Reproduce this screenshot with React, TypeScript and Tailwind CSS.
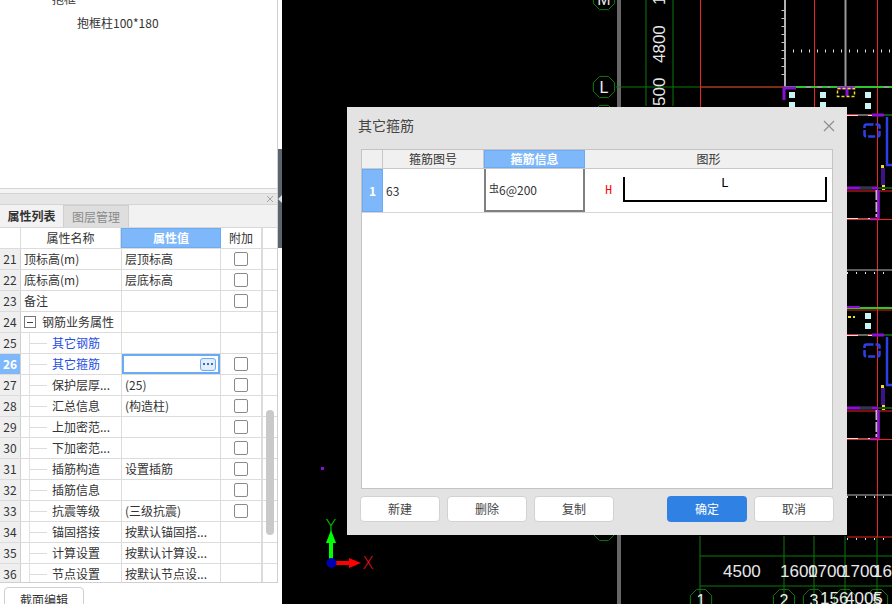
import React from "react";

type Row = { n: number; name: string; val?: string; chk?: boolean; kind?: "top" | "group" | "child"; blue?: boolean; sel?: boolean };

const rows: Row[] = [
  { n: 21, name: "顶标高(m)", val: "层顶标高", chk: true, kind: "top" },
  { n: 22, name: "底标高(m)", val: "层底标高", chk: true, kind: "top" },
  { n: 23, name: "备注", chk: true, kind: "top" },
  { n: 24, name: "钢筋业务属性", kind: "group" },
  { n: 25, name: "其它钢筋", kind: "child", blue: true },
  { n: 26, name: "其它箍筋", kind: "child", blue: true, chk: true, sel: true },
  { n: 27, name: "保护层厚...", val: "(25)", kind: "child", chk: true },
  { n: 28, name: "汇总信息", val: "(构造柱)", kind: "child", chk: true },
  { n: 29, name: "上加密范...", kind: "child", chk: true },
  { n: 30, name: "下加密范...", kind: "child", chk: true },
  { n: 31, name: "插筋构造", val: "设置插筋", kind: "child", chk: true },
  { n: 32, name: "插筋信息", kind: "child", chk: true },
  { n: 33, name: "抗震等级", val: "(三级抗震)", kind: "child", chk: true },
  { n: 34, name: "锚固搭接", val: "按默认锚固搭...", kind: "child" },
  { n: 35, name: "计算设置", val: "按默认计算设...", kind: "child" },
  { n: 36, name: "节点设置", val: "按默认节点设...", kind: "child" },
];

function PropRow({ r }: { r: Row }) {
  return (
    <div className="flex h-[21px] shrink-0 border-b border-[#dcdcdc]">
      <div className={r.sel ? "flex w-[21px] shrink-0 items-center justify-center border-r border-[#cfcfcf] bg-[#7eb8fb] font-bold text-white" : "flex w-[21px] shrink-0 items-center justify-center border-r border-[#cfcfcf] bg-[#efefef]"}>
        {r.n}
      </div>
      <div className="flex w-[101px] shrink-0 items-center border-r border-[#dcdcdc]">
        {r.kind === "top" && <span className="pl-[3px]">{r.name}</span>}
        {r.kind === "group" && (
          <>
            <span className="ml-[3px] flex h-[12px] w-[12px] items-center justify-center border border-[#777] bg-white">
              <span className="h-px w-[6px] bg-[#444]" />
            </span>
            <span className="ml-[6px]">{r.name}</span>
          </>
        )}
        {r.kind === "child" && (
          <>
            <span className="ml-[8px] h-[21px] w-px shrink-0 bg-[#e2e2e2]" />
            <span className="h-px w-[17px] shrink-0 bg-[#dcdcdc]" />
            <span className={r.blue ? "ml-[5px] text-[#1f4fe0]" : "ml-[5px]"}>{r.name}</span>
          </>
        )}
      </div>
      <div className="w-[99px] shrink-0 border-r border-[#dcdcdc]">
        {r.sel ? (
          <div className="flex h-[20px] items-center justify-end border-2 border-[#6aabf5] bg-white pr-[2px]">
            <span className="flex h-[13px] w-[16px] items-center justify-center gap-[2px] rounded-[3px] border border-[#6aabf5] bg-[#e3edfb]">
              <i className="h-[2px] w-[2px] bg-[#2f6fc8]" />
              <i className="h-[2px] w-[2px] bg-[#2f6fc8]" />
              <i className="h-[2px] w-[2px] bg-[#2f6fc8]" />
            </span>
          </div>
        ) : (
          <div className="flex h-[20px] items-center pl-[3px]">{r.val}</div>
        )}
      </div>
      <div className="flex w-[41px] shrink-0 items-center justify-center border-r border-[#dcdcdc]">
        {r.chk && <span className="h-[14px] w-[14px] rounded-[2px] border border-[#8a8a8a] bg-white" />}
      </div>
    </div>
  );
}

function Tree() {
  return (
    <div className="h-[189px] shrink-0 overflow-hidden border-b border-[#d6d6d6] bg-white">
      <div className="-mt-[13px]">
        <div className="flex h-[24px] items-center pl-[42px]">
          <span className="mr-[8px] h-[2px] w-[2px] bg-[#888]" />
          抱框
        </div>
        <div className="flex h-[24px] items-center pl-[77px]">抱框柱100*180</div>
      </div>
    </div>
  );
}

function LeftPanel() {
  return (
    <div className="flex h-[604px] w-[278px] shrink-0 flex-col bg-white text-[12px] text-[#333]">
      <div className="flex h-[583px] flex-col border-r border-b border-[#d0d0d0]">
        <Tree />
        <div className="h-[4px] shrink-0 bg-[#f4f4f4]" />
        <div className="flex h-[12px] shrink-0 items-center justify-end border-y border-[#d4d4d4] bg-[#e6e6e6] pr-[3px] text-[#aaa]">
          <svg width="8" height="8" viewBox="0 0 8 8" stroke="#a5a5a5" strokeWidth="1"><path d="M1 1l6 6M7 1l-6 6" /></svg>
        </div>
        <div className="flex h-[23px] shrink-0 border-b border-[#d8d8d8] bg-[#f2f2f2]">
          <div className="flex w-[63px] items-center justify-center font-bold text-[#333]">属性列表</div>
          <div className="flex w-[66px] items-center justify-center border border-b-0 border-[#cfcfcf] bg-[#dedede] text-[#8a8a8a]">图层管理</div>
        </div>
        <div className="relative min-h-0 flex-1 overflow-hidden">
          <div className="flex h-[21px] border-b border-[#dcdcdc]">
            <div className="w-[21px] shrink-0 border-r border-[#dcdcdc]" />
            <div className="flex w-[100px] shrink-0 items-center justify-center border-r border-[#dcdcdc]">属性名称</div>
            <div className="flex w-[100px] shrink-0 items-center justify-center border border-[#6aabf5] bg-[#7eb8fb] font-bold text-white">属性值</div>
            <div className="flex w-[41px] shrink-0 items-center justify-center border-r border-[#dcdcdc]">附加</div>
          </div>
          {rows.map((r) => (
            <PropRow key={r.n} r={r} />
          ))}
          <div className="absolute top-0 bottom-0 left-[262px] w-px bg-[#dcdcdc]" />
          <div className="absolute top-[182px] left-[266px] h-[125px] w-[8px] rounded-full bg-[#c9c9c9]" />
        </div>
      </div>
      <div className="flex-1 pt-[4px] pl-[4px]">
        <div className="flex h-[30px] w-[80px] justify-center rounded-t-[4px] border border-[#cfcfcf] bg-white pt-[3px] leading-[18px]">截面编辑</div>
      </div>
    </div>
  );
}

function Splitter() {
  return (
    <div className="w-[4px] shrink-0 bg-white pt-[149px]">
      <div className="flex h-[99px] items-center justify-center bg-[#5b6570]">
        <span className="h-0 w-0 border-y-[4px] border-r-[4px] border-y-transparent border-r-[#dfe3e6]" />
      </div>
    </div>
  );
}

function Hex({ x, y, label }: { x: number; y: number; label?: string }) {
  const r = 11.5;
  const pts = Array.from({ length: 8 }, (_, i) => {
    const a = (Math.PI / 4) * i + Math.PI / 8;
    return `${x + r * Math.cos(a)},${y + r * Math.sin(a)}`;
  }).join(" ");
  return (
    <g>
      <polygon points={pts} fill="none" stroke="#0d7a0d" strokeWidth="1" />
      {label && (
        <text x={x} y={y + 6} textAnchor="middle" fontSize="16" fill="#eee" fontFamily="'Liberation Sans', sans-serif">
          {label}
        </text>
      )}
    </g>
  );
}

function Bay({ dy }: { dy: number }) {
  return (
    <g transform={`translate(0 ${dy})`}>
      <path d="M847 115H872" stroke="#e8e8e8" strokeWidth="2" />
      <path d="M847 114.5H892" stroke="#e22" strokeWidth="1" />
      <path d="M858 115H868" stroke="#666" strokeWidth="2" />
      <path d="M872 115H884" stroke="#8a10d8" strokeWidth="3" />
      <path d="M884 115H892" stroke="#125012" strokeWidth="2" />
      <rect x="864.5" y="124.5" width="15" height="12" rx="2" fill="none" stroke="#2f3fe8" strokeWidth="2.5" strokeDasharray="7 2" />
      <path d="M887 117V165H892" fill="none" stroke="#2f3fe8" strokeWidth="2.5" />
      <rect x="881" y="165" width="3" height="3" fill="#f5e020" />
      <rect x="881" y="168" width="4" height="17" fill="#3c1488" />
      <rect x="882" y="185" width="3" height="5" fill="#f5e020" />
      <path d="M847 188H878" stroke="#8a10d8" strokeWidth="3" />
      <path d="M860 188H872" stroke="#125012" strokeWidth="2" />
      <path d="M878 188H892" stroke="#125012" strokeWidth="2" />
      <path d="M847 191H892" stroke="#e22" strokeWidth="1" />
      <path d="M876.5 190V217" stroke="#bbb" strokeWidth="2" strokeDasharray="10 2" />
      <path d="M878.5 190V219H870" fill="none" stroke="#8a10d8" strokeWidth="2.5" />
      <path d="M847 219H870" stroke="#e8e8e8" strokeWidth="2" />
      <path d="M858 219H868" stroke="#666" strokeWidth="2" />
      <path d="M847 219.5H892" stroke="#e22" strokeWidth="1" />
    </g>
  );
}

function Cad() {
  const squares = [
    [792, 95], [823, 95], [868, 95], [792, 105], [823, 105], [868, 106], [868, 316], [868, 326],
  ];
  return (
    <svg className="absolute inset-0" width="610" height="604" viewBox="282 0 610 604" fontFamily="'Liberation Sans', sans-serif">
      <rect x="617" y="0" width="4" height="604" fill="#666" />
      <path d="M646 0V106M673 0V106M616 87H785M700 536V604M784 536V604M814 536V604M845 536V604M877 536V604M700 556H892M700 586H892" stroke="#0d7a0d" strokeWidth="1" />
      <path d="M700.5 87H785" stroke="#e22" strokeWidth="1" />
      <path d="M700.5 0V108M814.5 0V108M877.5 0V537" stroke="#e22" strokeWidth="1" />
      <path d="M847 537H892" stroke="#e22" strokeWidth="1" />
      <path d="M847 495H892" stroke="#bbb" strokeWidth="1" />
      <path d="M847 497H892" stroke="#ddd" strokeWidth="2" strokeDasharray="1 8" />
      <path d="M847 539H892" stroke="#ddd" strokeWidth="2" strokeDasharray="1 8" />
      <path d="M785 0V87" stroke="#eee" strokeWidth="1.5" />
      <path d="M845.5 0V87" stroke="#9a9a9a" strokeWidth="2" />
      <path d="M793 51H892" stroke="#ddd" strokeWidth="3" strokeDasharray="1 7" />
      <path d="M783 10V80" stroke="#ccc" strokeWidth="3" strokeDasharray="1 7" />
      <path d="M784 87H892" stroke="#2cc92c" strokeWidth="2" />
      <path d="M806 87H830M884 87H892" stroke="#9a9a9a" strokeWidth="2" strokeDasharray="5 6" />
      <path d="M784 100V88H796M837 88H855M847 88V96" fill="none" stroke="#8a10d8" strokeWidth="3" />
      <rect x="837.5" y="88.5" width="17" height="8" fill="none" stroke="#f5e020" strokeWidth="1.5" strokeDasharray="3 2" />
      <Bay dy={0} />
      <Bay dy={220} />
      <path d="M847 270H892" stroke="#bbb" strokeWidth="1" />
      <path d="M847 273H892" stroke="#ddd" strokeWidth="2" strokeDasharray="1 8" />
      <path d="M847 308H892" stroke="#2cc92c" strokeWidth="2" />
      <path d="M847 307H860" stroke="#8a10d8" strokeWidth="2" />
      <path d="M847 310H892" stroke="#e22" strokeWidth="1" />
      <path d="M848 317H855" stroke="#f5e020" strokeWidth="2" strokeDasharray="3 2" />
      {squares.map(([x, y], i) => (
        <rect key={i} x={x - 3} y={y - 3} width="6" height="6" fill="#c8f4f4" />
      ))}
      <rect x="321" y="467" width="3" height="3" fill="#8a10d8" />
      <Hex x={604} y={-1} label="M" />
      <Hex x={604} y={87} label="L" />
      <Hex x={604} y={116} />
      <Hex x={604} y={530} />
      <Hex x={701} y={600} label="1" />
      <Hex x={784} y={600} label="2" />
      <Hex x={814} y={600} label="3" />
      <Hex x={845} y={600} />
      <Hex x={877} y={600} label="5" />
      <g fill="#e8e8e8" fontSize="17">
        <text transform="translate(665 63) rotate(-90)">4800</text>
        <text transform="translate(665 5) rotate(-90)">1</text>
        <text transform="translate(665 106) rotate(-90)">500</text>
        <text x="723" y="577">4500</text>
        <text x="780" y="577">1600</text>
        <text x="808" y="577">1700</text>
        <text x="841" y="577">1700</text>
        <text x="873" y="577">1600</text>
        <text x="820" y="604">156</text>
        <text x="845" y="604">4005</text>
      </g>
      <path d="M331 560V540" stroke="#00ff00" strokeWidth="4" />
      <polygon points="331,530 326,543 336,543" fill="#00ff00" />
      <path d="M335 563H352" stroke="#ff0000" strokeWidth="4" />
      <polygon points="361,563 349,558 349,568" fill="#ff0000" />
      <circle cx="331.5" cy="563" r="5" fill="#0000b0" />
      <text x="331" y="532" textAnchor="middle" fontSize="17" fill="#00e000" fontFamily="'DejaVu Sans', sans-serif" fontWeight="200">Y</text>
      <text x="368" y="569" textAnchor="middle" fontSize="17" fill="#ff1010" fontFamily="'DejaVu Sans', sans-serif" fontWeight="200">X</text>
    </svg>
  );
}

function DialogBtn({ label, primary }: { label: string; primary?: boolean }) {
  return (
    <button className={primary ? "h-[26px] w-[80px] rounded-[4px] bg-[#2f81e4] text-[12px] text-white" : "h-[26px] w-[80px] rounded-[4px] border border-[#d2d2d2] bg-white text-[12px] text-[#444]"}>
      {label}
    </button>
  );
}

function Dialog() {
  return (
    <div className="absolute top-[107px] left-[65px] flex h-[428px] w-[500px] flex-col bg-[#e3e3e3] px-[14px] text-[12px] text-[#333]">
      <div className="flex h-[42px] shrink-0 items-center justify-between pb-[5px]">
        <span className="-ml-[3px] text-[14px] text-[#444]">其它箍筋</span>
        <svg className="-mr-[2px]" width="12" height="12" viewBox="0 0 12 12" stroke="#8e8e8e" strokeWidth="1.2"><path d="M1 1l10 10M11 1L1 11" /></svg>
      </div>
      <div className="flex h-[340px] shrink-0 flex-col border border-[#c4c4c4] bg-white">
        <div className="flex h-[19px] shrink-0 border-b border-[#c8c8c8] bg-[#f0f0f0]">
          <div className="w-[21px] shrink-0 border-r border-[#c8c8c8]" />
          <div className="flex w-[101px] shrink-0 items-center justify-center border-r border-[#c8c8c8]">箍筋图号</div>
          <div className="flex w-[101px] shrink-0 items-center justify-center border border-[#6aabf5] bg-[#7eb8fb] font-bold text-white">箍筋信息</div>
          <div className="flex flex-1 items-center justify-center">图形</div>
        </div>
        <div className="flex h-[44px] shrink-0 border-b border-[#d6d6d6]">
          <div className="flex w-[21px] shrink-0 items-center justify-center border border-[#6aabf5] bg-[#7eb8fb] font-bold text-white">1</div>
          <div className="flex w-[101px] shrink-0 items-center pl-[3px]">63</div>
          <div className="flex w-[101px] shrink-0 items-center border-2 border-t-0 border-[#808080] pl-[3px]">
            <span className="-mt-[4px] text-[10px]">虫</span>6@200
          </div>
          <div className="flex min-w-0 flex-1 items-center pl-[20px]">
            <span className="w-[18px] shrink-0 font-['Liberation_Mono',monospace] text-[12px] text-[#f00]">H</span>
            <div className="flex h-[25px] w-[204px] justify-center self-end mb-[10px] border-x-[2px] border-b-[2px] border-black font-['Liberation_Mono',monospace] text-[13px] leading-[14px] text-black">
              L
            </div>
          </div>
        </div>
      </div>
      <div className="-mx-[1px] mt-[7px] flex shrink-0">
        <div className="flex gap-[7px]">
          <DialogBtn label="新建" />
          <DialogBtn label="删除" />
          <DialogBtn label="复制" />
        </div>
        <div className="ml-auto flex gap-[7px]">
          <DialogBtn label="确定" primary />
          <DialogBtn label="取消" />
        </div>
      </div>
    </div>
  );
}

export default function App() {
  return (
    <div className="flex h-[604px] w-[892px] overflow-hidden bg-black font-['Noto_Sans_CJK_SC','Liberation_Sans',sans-serif]">
      <LeftPanel />
      <Splitter />
      <div className="relative h-[604px] w-[610px] shrink-0 overflow-hidden bg-black">
        <Cad />
        <Dialog />
      </div>
    </div>
  );
}
